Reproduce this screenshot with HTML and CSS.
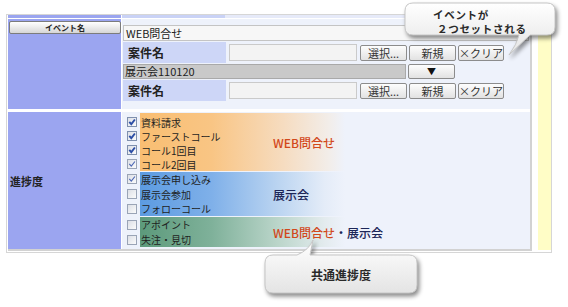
FILE: index.html
```html
<!DOCTYPE html>
<html lang="ja">
<head>
  <meta charset="UTF-8">
  <title>イベント・進捗度</title>
  <link rel="stylesheet" href="styles.css">
</head>
<body>
  <div class="page">
    <div class="frame">
      <div class="sheet">
        <div class="row row-top">
          <div class="label"></div>
          <div class="cell cell-top"></div>
        </div>

        <div class="row row-event">
          <div class="label label-event">
            <button class="name-btn">イベント名</button>
          </div>
          <div class="cell cell-event">
            <div class="event-name">WEB問合せ</div>
            <div class="case">
              <div class="case-label">案件名</div>
              <div class="case-input"></div>
              <button class="btn btn-select">選択...</button>
              <button class="btn">新規</button>
              <button class="btn btn-clear">×クリア</button>
            </div>
            <div class="alt">
              <div class="alt-bar">展示会110120</div>
              <button class="btn btn-drop">▼</button>
            </div>
            <div class="case">
              <div class="case-label">案件名</div>
              <div class="case-input"></div>
              <button class="btn btn-select">選択...</button>
              <button class="btn">新規</button>
              <button class="btn btn-clear">×クリア</button>
            </div>
          </div>
        </div>

        <div class="row row-progress">
          <div class="label label-progress">進捗度</div>
          <div class="cell cell-progress">
            <div class="group group-web">
              <div class="items">
                <div class="item"><span class="cb on"><svg viewBox="0 0 8 8"><path d="M1.3 3.8 L3.3 6.2 L6.9 1.5"/></svg></span>資料請求</div>
                <div class="item"><span class="cb on"><svg viewBox="0 0 8 8"><path d="M1.3 3.8 L3.3 6.2 L6.9 1.5"/></svg></span>ファーストコール</div>
                <div class="item"><span class="cb on"><svg viewBox="0 0 8 8"><path d="M1.3 3.8 L3.3 6.2 L6.9 1.5"/></svg></span>コール1回目</div>
                <div class="item"><span class="cb soft"><svg viewBox="0 0 8 8"><path d="M1.3 3.8 L3.3 6.2 L6.9 1.5"/></svg></span>コール2回目</div>
              </div>
              <span class="title title-web">WEB問合せ</span>
            </div>
            <div class="group group-show">
              <div class="items">
                <div class="item"><span class="cb soft"><svg viewBox="0 0 8 8"><path d="M1.3 3.8 L3.3 6.2 L6.9 1.5"/></svg></span>展示会申し込み</div>
                <div class="item"><span class="cb"></span>展示会参加</div>
                <div class="item"><span class="cb"></span>フォローコール</div>
              </div>
              <span class="title title-show">展示会</span>
            </div>
            <div class="group group-both">
              <div class="items">
                <div class="item"><span class="cb"></span>アポイント</div>
                <div class="item"><span class="cb"></span>失注・見切</div>
              </div>
              <span class="title"><span class="title-web">WEB問合せ</span><span class="title-show">・展示会</span></span>
            </div>
          </div>
        </div>
      </div>
      <div class="memo"></div>
    </div>

    <!-- 吹き出し -->
    <div class="callout callout-event">
      <svg class="bubble" width="162" height="62" viewBox="0 0 162 62">
        <defs>
          <linearGradient id="bubble-fill-a" x1="0" y1="0" x2="0" y2="1">
            <stop offset="0" stop-color="#ffffff"/>
            <stop offset="1" stop-color="#e4e4e4"/>
          </linearGradient>
        </defs>
        <path d="M10 2 H144 Q152 2 152 10 V26 Q152 34 144 34 H127 L106 54 Q114 43 116 34 H10 Q2 34 2 26 V10 Q2 2 10 2 Z" fill="url(#bubble-fill-a)" stroke="#c6c6c6"/>
      </svg>
      <div class="callout-text">
        <span class="line">イベントが</span>
        <span class="line indent">２つセットされる</span>
      </div>
    </div>

    <div class="callout callout-common">
      <svg class="bubble" width="162" height="64" viewBox="0 0 162 64">
        <defs>
          <linearGradient id="bubble-fill-b" x1="0" y1="0" x2="0" y2="1">
            <stop offset="0" stop-color="#ffffff"/>
            <stop offset="1" stop-color="#e4e4e4"/>
          </linearGradient>
        </defs>
        <path d="M10 17 H34 Q46 12 50 2 L47 17 H146 Q154 17 154 25 V47 Q154 55 146 55 H10 Q2 55 2 47 V25 Q2 17 10 17 Z" fill="url(#bubble-fill-b)" stroke="#c6c6c6"/>
      </svg>
      <div class="callout-text">共通進捗度</div>
    </div>
  </div>
</body>
</html>
```

FILE: styles.css
```css
body {
  margin: 0;
  font-family: "Noto Sans CJK JP", "Noto Sans", sans-serif;
  color: #222;
  background-color: #ffffff;
}

.page {
  position: relative;
  width: 568px;
  height: 307px;
  padding: 14px 0 0 6px;
  box-sizing: border-box;
}

.frame {
  display: flex;
  width: 546px;
  height: 239px;
  box-sizing: border-box;
  border: 1px solid #d6d6d6;
  padding: 0 0 1px 1px;
}

.sheet {
  width: 524px;
  height: 236px;
  box-sizing: border-box;
  border-right: 2px solid #d2d2d2;
  border-bottom: 2px solid #d2d2d2;
  display: flex;
  flex-direction: column;
}

.memo {
  width: 13px;
  margin-left: 6px;
  margin-bottom: 1px;
  background-color: #fffdc6;
}

.row {
  display: grid;
  grid-template-columns: 113px 408px;
  column-gap: 1px;
}

.label {
  background-color: #9ba5f0;
}

.cell {
  background-color: #eef2fb;
}

/* 上の行（切れている） */
.row-top {
  height: 3px;
  margin-bottom: 1px;
}

.cell-top {
  background: linear-gradient(to right, #c9d2f6 0, #c9d2f6 103px, #e6eaf9 103px);
}

/* イベント行 */
.row-event {
  height: 90px;
  margin-bottom: 3px;
}

.label-event {
  padding: 2px 0 0 1px;
}

.name-btn {
  display: block;
  width: 112px;
  height: 13px;
  padding: 0;
  border: 1px solid #7c7c7c;
  border-radius: 2px;
  background: linear-gradient(#ffffff, #d6d6d6);
  font-family: "Noto Sans CJK JP", sans-serif;
  font-size: 8px;
  font-weight: bold;
  line-height: 11px;
  color: #222;
}

.cell-event {
  padding: 6px 1px 0 1px;
}

.event-name {
  height: 16px;
  box-sizing: border-box;
  border: 1px solid #c4c4c4;
  background-color: #f7f7f7;
  padding-left: 2px;
  font-size: 11px;
  line-height: 14px;
  margin-bottom: 1px;
}

.case {
  display: flex;
  align-items: center;
  height: 21px;
  margin-bottom: 1px;
}

.case-label {
  width: 103px;
  height: 100%;
  box-sizing: border-box;
  padding-left: 5px;
  background-color: #cdd6f7;
  font-size: 12px;
  font-weight: bold;
  line-height: 21px;
}

.case-input {
  width: 128px;
  height: 17px;
  box-sizing: border-box;
  margin-left: 3px;
  border: 1px solid #cacaca;
  background-color: #f3f3f3;
}

.btn {
  height: 16px;
  width: 47px;
  box-sizing: border-box;
  margin-left: 2px;
  padding: 0;
  border: 1px solid #8c8c8c;
  border-radius: 2px;
  background: linear-gradient(#fdfdfd, #e2e2e2);
  font-family: "Noto Sans CJK JP", sans-serif;
  font-size: 11px;
  line-height: 14px;
  color: #333;
}

.btn-select {
  margin-left: 3px;
}

.btn-clear {
  width: 46px;
}

.alt {
  display: flex;
  height: 15px;
  margin-bottom: 1px;
}

.alt-bar {
  width: 283px;
  box-sizing: border-box;
  border: 1px solid #a9a9a9;
  background-color: #c9c9c9;
  padding-left: 1px;
  font-size: 11px;
  line-height: 13px;
}

.btn-drop {
  height: 15px;
  font-size: 9px;
  color: #111;
}

/* 進捗度 */
.row-progress {
  height: 137px;
}

.label-progress {
  display: flex;
  align-items: center;
  padding-left: 2px;
  font-size: 11px;
  font-weight: bold;
}

.cell-progress {
  padding-top: 1px;
}

.group {
  display: flex;
  padding-left: 5px;
  margin-bottom: 1px;
  background-repeat: no-repeat;
  background-position: 18px 0;
  background-size: 205px 100%;
}

.group-web {
  height: 58px;
  background-image: linear-gradient(to right, #f9be72 0%, #f9c584 35%, #f6dcc0 70%, #f2ede9 92%, #eef2fb 100%);
}

.group-web .items {
  padding-top: 2px;
}

.group-show {
  height: 44px;
  background-image: linear-gradient(to right, #5c9be1 0%, #7fb0e9 35%, #bcd5f1 68%, #e4ecf8 90%, #eef2fb 100%);
}

.group-both {
  height: 30px;
  background-image: linear-gradient(to right, #5c9a7b 0%, #7fb19a 35%, #bcd6cb 68%, #e3ebee 90%, #eef2fb 100%);
}

.items {
  width: 146px;
  box-sizing: border-box;
  display: flex;
  flex-direction: column;
}

.item {
  flex: 1;
  display: flex;
  align-items: center;
  font-size: 10px;
  line-height: 11px;
  color: #1e1e1e;
}

.cb {
  width: 10px;
  height: 10px;
  box-sizing: border-box;
  margin-right: 4px;
  border: 1px solid #9aa4b6;
  background: linear-gradient(135deg, #dcdfe6, #fbfbfb);
  display: flex;
}

.cb svg {
  width: 8px;
  height: 8px;
  fill: none;
}

.cb.on {
  border-color: #7f90ae;
}

.cb.on svg {
  stroke: #2c4ea6;
  stroke-width: 1.9;
}

.cb.soft svg {
  stroke: #4b66b4;
  stroke-width: 1.1;
}

.title {
  align-self: center;
  font-size: 12px;
  font-weight: 500;
}

.title-web {
  color: #d2481b;
}

.title-show {
  color: #1c2658;
}

/* 吹き出し */
.callout {
  position: absolute;
}

.callout .bubble {
  position: absolute;
  left: 0;
  top: 0;
  filter: drop-shadow(2px 3px 2px rgba(0, 0, 0, 0.45));
}

.callout-text {
  position: relative;
  color: #2a2a2a;
}

.callout-event {
  left: 403px;
  top: 1px;
  width: 162px;
  height: 62px;
}

.callout-event .callout-text {
  padding: 7px 0 0 30px;
  font-size: 10.5px;
  line-height: 14px;
  letter-spacing: 0.7px;
  font-weight: bold;
}

.callout-event .line {
  display: block;
  height: 14px;
  overflow: hidden;
}

.callout-event .indent {
  padding-left: 4px;
}

.callout-common {
  left: 263px;
  top: 238px;
  width: 162px;
  height: 64px;
}

.callout-common .callout-text {
  margin-top: 17px;
  width: 156px;
  height: 38px;
  display: flex;
  align-items: center;
  justify-content: center;
  font-size: 12px;
  font-weight: bold;
}
```
